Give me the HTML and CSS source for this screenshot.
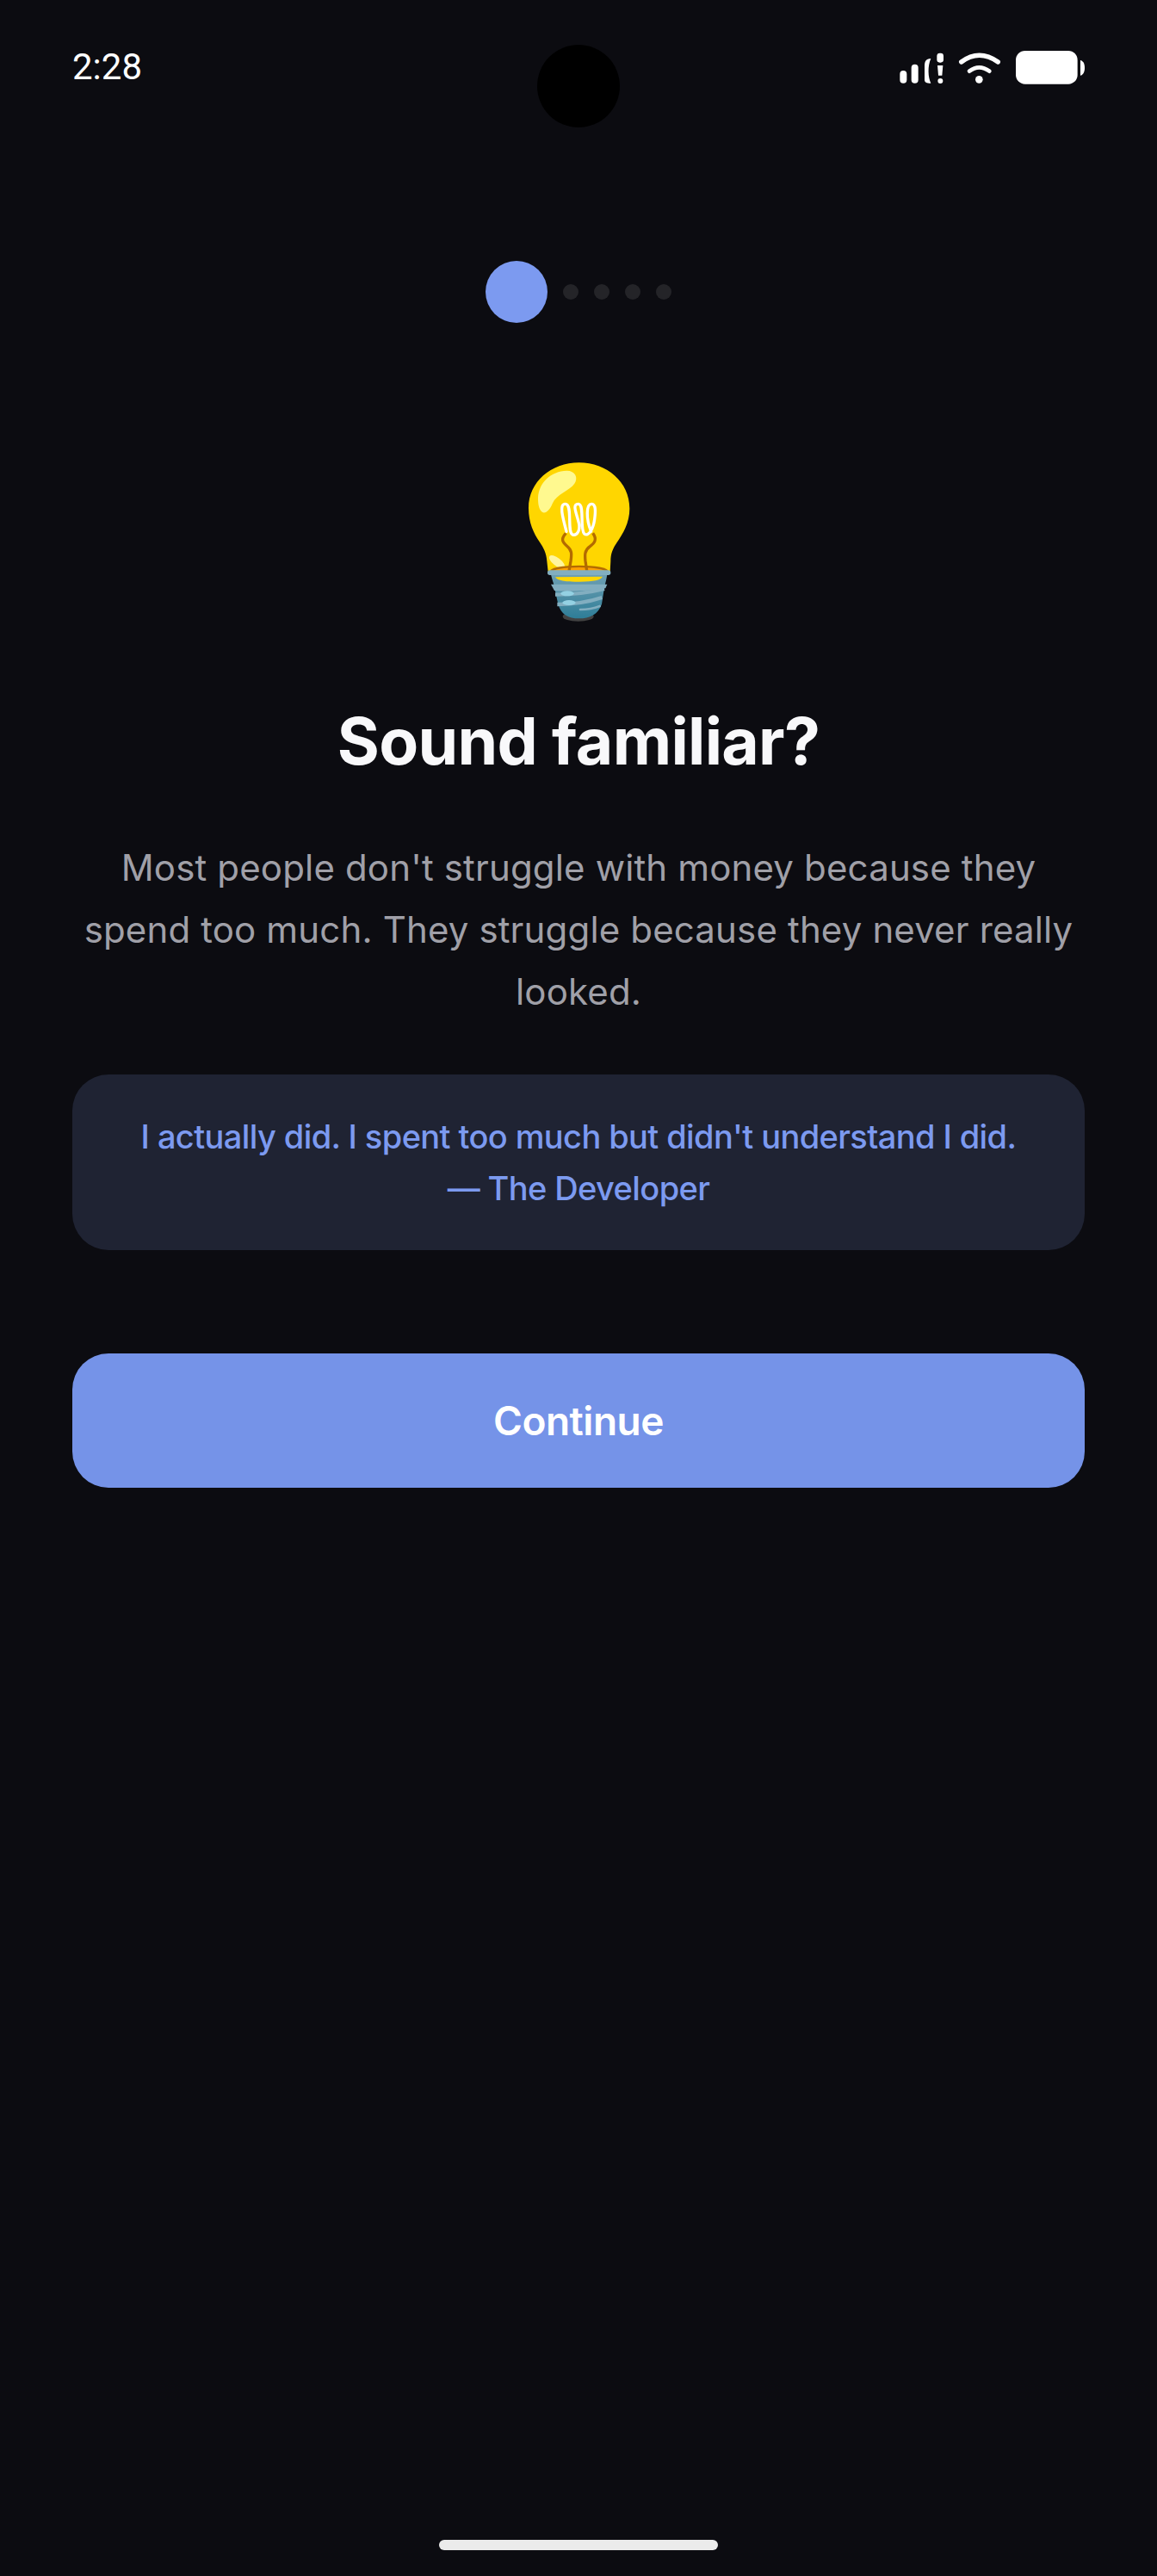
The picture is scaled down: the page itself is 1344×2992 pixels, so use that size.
FILE: index.html
```html
<!DOCTYPE html>
<html lang="en">
<head>
    <meta charset="UTF-8">
    <meta name="viewport" content="width=device-width, initial-scale=1.0">
    <title>Sound familiar?</title>
    <link rel="stylesheet" href="styles.css">
</head>
<body>
    <div class="screen">
        <div class="status-bar">
            <span class="time">2:28</span>
            <svg class="status-icons" viewBox="75 0 645 210" width="215" height="70">
                <rect x="76" y="126" width="24" height="44" rx="12" fill="#fff"/>
                <rect x="116" y="104" width="24" height="66" rx="12" fill="#fff"/>
                <path d="M184 84 C166 84 162 96 162 110 V158 C162 166 168 170 184 170 C174 150 172 110 184 84 Z" fill="#fff"/>
                <rect x="205" y="65" width="23" height="33" rx="10" fill="#fff"/>
                <path d="M207 108 H226 L223 143 H210 Z" fill="#fff"/>
                <circle cx="217" cy="162" r="9" fill="#fff"/>
                <path d="M290 96 Q352 50 418 96" fill="none" stroke="#fff" stroke-width="16" stroke-linecap="round"/>
                <path d="M318 128 Q352 102 388 128" fill="none" stroke="#fff" stroke-width="14" stroke-linecap="round"/>
                <circle cx="352" cy="157" r="13" fill="#fff"/>
                <rect x="480" y="57" width="215" height="116" rx="32" fill="#fff"/>
                <path d="M705 90 C714 92 720 100 720 116 C720 132 714 141 705 143 Z" fill="#fff"/>
            </svg>
        </div>
        <div class="camera"></div>

        <div class="steps">
            <span class="step step-active"></span>
            <span class="step"></span>
            <span class="step"></span>
            <span class="step"></span>
            <span class="step"></span>
        </div>

        <svg class="bulb" viewBox="0 0 492 630" width="164" height="210">
            <defs>
                <linearGradient id="screw" x1="0" y1="0" x2="0" y2="1">
                    <stop offset="0" stop-color="#6fa0b4"/>
                    <stop offset="1" stop-color="#2e7d97"/>
                </linearGradient>
            </defs>
            <ellipse cx="245" cy="588" rx="54" ry="17" fill="#424242"/>
            <path d="M248 52 C345 52 424 120 424 212 C424 262 400 300 380 330 C365 352 358 370 358 395 L356 432 L140 432 L136 395 C134 368 125 350 110 328 C90 298 72 262 72 210 C72 120 150 52 248 52 Z" fill="#ffd600"/>
            <path d="M105 175 C108 120 150 82 205 80 C235 80 246 105 232 125 C215 150 170 160 155 195 C145 222 125 235 115 220 C106 208 105 190 105 175 Z" fill="#fff98f"/>
            <ellipse cx="171" cy="398" rx="33" ry="14" transform="rotate(38 171 398)" fill="#fff59d"/>
            <ellipse cx="248" cy="430" rx="102" ry="20" fill="#b36b00"/>
            <ellipse cx="248" cy="434" rx="94" ry="17" fill="#ffa000"/>
            <path d="M202 298 C182 320 192 330 205 342 C225 358 222 372 219 395 L212 436" fill="none" stroke="#b36b00" stroke-width="10"/>
            <path d="M296 298 C312 320 302 332 286 344 C266 358 268 376 270 395 L276 436" fill="none" stroke="#b36b00" stroke-width="10"/>
            <path d="M204 292 C190 240 178 196 200 196 C226 196 206 290 224 302 C240 310 252 288 248 266 C240 230 222 196 245 196 C268 196 250 282 266 300 C282 312 298 280 302 250 C306 220 306 196 292 196 C272 196 272 250 290 292" fill="none" stroke="#fff" stroke-width="10" stroke-linecap="round"/>
            <path d="M150 440 H346 C342 470 336 480 334 500 L327 545 C315 580 285 595 248 595 C210 595 185 580 175 545 L165 500 C160 470 152 455 150 440 Z" fill="url(#screw)"/>
            <rect x="138" y="427" width="220" height="17" rx="8" fill="#82aec0"/>
            <path d="M165 451 L330 449 C322 462 300 466 250 467 C210 468 175 466 165 451 Z" fill="#ffd600"/>
            <path d="M150 476 H346 L340 490 C290 500 210 502 162 498 Z" fill="#82aec0"/>
            <path d="M165 512 C220 512 280 506 336 492" fill="none" stroke="#82aec0" stroke-width="13"/>
            <path d="M172 546 C230 546 280 538 328 522" fill="none" stroke="#82aec0" stroke-width="13"/>
            <path d="M252 564 C275 564 300 560 320 552" fill="none" stroke="#82aec0" stroke-width="8" stroke-linecap="round"/>
            <ellipse cx="207" cy="508" rx="23" ry="9" fill="#94d1e3"/>
            <ellipse cx="213" cy="540" rx="23" ry="9" fill="#94d1e3"/>
        </svg>

        <h1 class="title">Sound familiar?</h1>
        <p class="lead">Most people don't struggle with money because they spend too much. They struggle because they never really looked.</p>

        <div class="quote">
            I actually did. I spent too much but didn't understand I did.<br>
            — The Developer
        </div>

        <button class="continue">Continue</button>

        <div class="home-bar"></div>
    </div>
</body>
</html>
```

FILE: styles.css
```css
* {
    box-sizing: border-box;
}
body {
    margin: 0;
    background-color: #0c0c11;
    font-family: Inter, sans-serif;
    color: white;
}
.screen {
    position: relative;
    display: flex;
    flex-direction: column;
    min-height: 2992px;
    padding: 0 84px;
}
.status-bar {
    display: flex;
    justify-content: space-between;
    align-items: center;
    height: 70px;
    margin-top: 40px;
}
.time {
    margin-top: 5px;
    font-family: Roboto, sans-serif;
    font-size: 42px;
}
.camera {
    position: absolute;
    top: 52px;
    left: 624px;
    width: 96px;
    height: 96px;
    border-radius: 50%;
    background-color: #000;
}
.steps {
    display: flex;
    justify-content: center;
    align-items: center;
    gap: 18px;
    margin-top: 193px;
}
.step {
    width: 18px;
    height: 18px;
    border-radius: 50%;
    background-color: #242428;
}
.step-active {
    width: 72px;
    height: 72px;
    background-color: #7c9af0;
}
.bulb {
    display: block;
    align-self: center;
    margin-top: 145px;
}
.title {
    margin: 86px 0 0;
    font-size: 75px;
    font-weight: 700;
    line-height: 90px;
    letter-spacing: -0.7px;
    text-align: center;
    color: #f8f8fa;
}
.lead {
    margin: 66px 0 0;
    padding: 0 6px;
    font-size: 42px;
    line-height: 72px;
    letter-spacing: 0.15px;
    text-align: center;
    color: #a0a0a8;
}
.quote {
    margin-top: 60px;
    height: 204px;
    padding: 42px 30px 0;
    border-radius: 42px;
    background-color: #1f2333;
    font-size: 38px;
    font-weight: 500;
    line-height: 60px;
    letter-spacing: -0.6px;
    text-align: center;
    color: #7c9af0;
}
.continue {
    height: 156px;
    margin-top: 120px;
    border: none;
    border-radius: 42px;
    background-color: #7593e8;
    font-family: inherit;
    font-size: 46px;
    font-weight: 600;
    letter-spacing: -0.5px;
    color: white;
}
.home-bar {
    align-self: center;
    width: 324px;
    height: 12px;
    margin-top: auto;
    margin-bottom: 30px;
    border-radius: 6px;
    background-color: #ebebeb;
}
```
